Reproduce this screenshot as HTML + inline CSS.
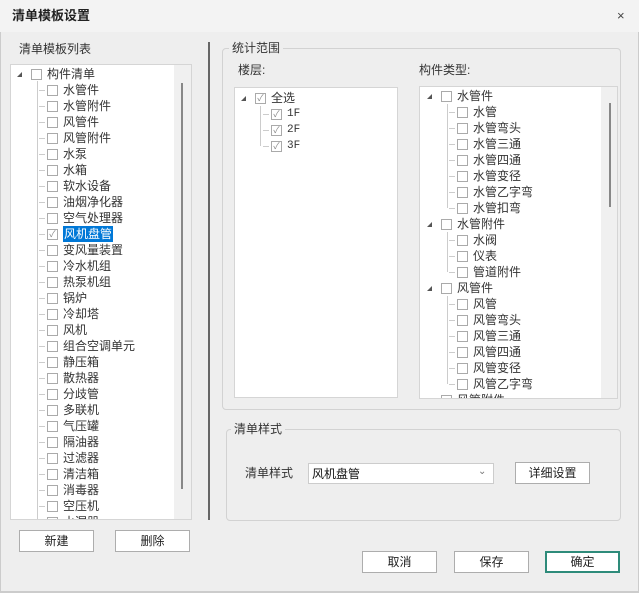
<!DOCTYPE html><html><head><meta charset="utf-8"><style>
*{margin:0;padding:0;box-sizing:border-box}
body{width:639px;height:593px;background:#eeeeee;font-family:"Liberation Sans","Noto Sans CJK SC",sans-serif;font-size:12px;color:#333;position:relative;overflow:hidden}
.a{position:absolute}
.t{position:absolute;white-space:nowrap;line-height:16px}
.cb{position:absolute;width:11px;height:11px;border:1px solid #aaa;background:#fff}
.btn{position:absolute;height:22px;border:1px solid #adadad;background:#fff;text-align:center;line-height:20px;font-size:12px;color:#222}
.box{position:absolute;background:#fff;border:1px solid #d5d5d5}
.grp{position:absolute;border:1px solid #d2d2d2;border-radius:4px}
.lg{position:absolute;background:#eeeeee;padding:0 3px;line-height:16px;color:#333}
.tri{position:absolute;width:0;height:0;border-left:5px solid transparent;border-bottom:5px solid #555}
.ck{position:absolute;font-size:9px;color:#888;line-height:11px;width:11px;text-align:center}
.vl{position:absolute;border-left:1px solid #ccc}
.hl{position:absolute;border-top:1px solid #ccc;width:6px}
</style></head><body>
<div class="a" style="left:0;top:0;width:639px;height:32px;background:#f3f3f3"></div>
<div class="t" style="left:12px;top:8px;font-weight:bold;font-size:13px;color:#222">清单模板设置</div>
<div class="t" style="left:617px;top:8px;font-size:13px;color:#444">×</div>
<div class="a" style="left:0;top:32px;width:1px;height:561px;background:#ccc"></div>
<div class="a" style="left:638px;top:32px;width:1px;height:561px;background:#ccc"></div>
<div class="a" style="left:0;top:591px;width:639px;height:2px;background:#ccc"></div>

<div class="t" style="left:19px;top:41px">清单模板列表</div>
<div class="box" style="left:10px;top:64px;width:182px;height:456px;overflow:hidden" id="L"></div>
<div class="a" style="left:174px;top:65px;width:17px;height:454px;background:#f0f0f0"></div>
<div class="a" style="left:181px;top:83px;width:2px;height:406px;background:#888"></div>
<div class="a" style="left:208px;top:42px;width:2px;height:478px;background:#666"></div>

<div class="btn" style="left:19px;top:530px;width:75px">新建</div>
<div class="btn" style="left:115px;top:530px;width:75px">删除</div>

<div class="grp" style="left:222px;top:48px;width:399px;height:362px"></div>
<div class="lg" style="left:229px;top:40px">统计范围</div>
<div class="t" style="left:238px;top:62px">楼层:</div>
<div class="t" style="left:419px;top:62px">构件类型:</div>
<div class="box" style="left:234px;top:87px;width:164px;height:311px"></div>
<div class="box" style="left:419px;top:86px;width:199px;height:313px;overflow:hidden" id="R"></div>
<div class="a" style="left:601px;top:87px;width:16px;height:311px;background:#f0f0f0"></div>
<div class="a" style="left:609px;top:103px;width:2px;height:104px;background:#888"></div>

<div class="grp" style="left:226px;top:429px;width:395px;height:92px"></div>
<div class="lg" style="left:231px;top:421px">清单样式</div>
<div class="t" style="left:245px;top:465px">清单样式</div>
<div class="a" style="left:308px;top:463px;width:186px;height:21px;background:#fff;border:1px solid #ccc"></div>
<div class="t" style="left:312px;top:466px;color:#111">风机盘管</div>
<div class="t" style="left:478px;top:464px;color:#777;font-size:10px">⌄</div>
<div class="btn" style="left:515px;top:462px;width:75px">详细设置</div>

<div class="btn" style="left:362px;top:551px;width:75px">取消</div>
<div class="btn" style="left:454px;top:551px;width:75px">保存</div>
<div class="btn" style="left:545px;top:551px;width:75px;border:2px solid #2e8b7a;line-height:18px">确定</div>
<script>
function row(p,x,y,txt,opt){opt=opt||{};
 var h='';
 if(opt.tri)h+='<div class="tri" style="left:'+(x-14)+'px;top:'+(y+6)+'px"></div>';
 if(opt.line)h+='<div class="hl" style="left:'+(x-8)+'px;top:'+(y+8)+'px"></div>';
 h+='<div class="cb" style="left:'+x+'px;top:'+(y+3)+'px"></div>';
 if(opt.ck)h+='<div class="ck" style="left:'+(x)+'px;top:'+(y+3)+'px">✓</div>';
 var st=opt.sel?'background:#0078d7;color:#fff;padding:0 1px;':'';
 h+='<div class="t" style="left:'+(x+16)+'px;top:'+y+'px;'+st+(opt.mono?'font-family:Liberation Mono,monospace;font-size:11px;':'')+'">'+txt+'</div>';
 p.insertAdjacentHTML('beforeend',h);}
var L=document.getElementById('L');
row(L,20,1,'构件清单',{tri:1});
L.insertAdjacentHTML('beforeend','<div class="vl" style="left:26px;top:16px;height:440px"></div>');
var li=['水管件','水管附件','风管件','风管附件','水泵','水箱','软水设备','油烟净化器','空气处理器','风机盘管','变风量装置','冷水机组','热泵机组','锅炉','冷却塔','风机','组合空调单元','静压箱','散热器','分歧管','多联机','气压罐','隔油器','过滤器','清洁箱','消毒器','空压机','水漏器'];
li.forEach(function(s,i){row(L,36,17+i*16,s,{line:1,ck:i==9,sel:i==9});});
var b=document.body;
row(b,255,90,'全选',{tri:1,ck:1});
b.insertAdjacentHTML('beforeend','<div class="vl" style="left:260px;top:106px;height:40px"></div>');
['1F','2F','3F'].forEach(function(s,i){row(b,271,106+i*16,s,{line:1,ck:1,mono:1});});
var R=document.getElementById('R');
var y=1;
function grp(n,items){row(R,21,y,n,{tri:1});R.insertAdjacentHTML('beforeend','<div class="vl" style="left:27px;top:'+(y+16)+'px;height:'+(items.length*16-8)+'px"></div>');y+=16;items.forEach(function(s){row(R,37,y,s,{line:1});y+=16;});}
grp('水管件',['水管','水管弯头','水管三通','水管四通','水管变径','水管乙字弯','水管扣弯']);
grp('水管附件',['水阀','仪表','管道附件']);
grp('风管件',['风管','风管弯头','风管三通','风管四通','风管变径','风管乙字弯']);
grp('风管附件',[]);
</script>
</body></html>
